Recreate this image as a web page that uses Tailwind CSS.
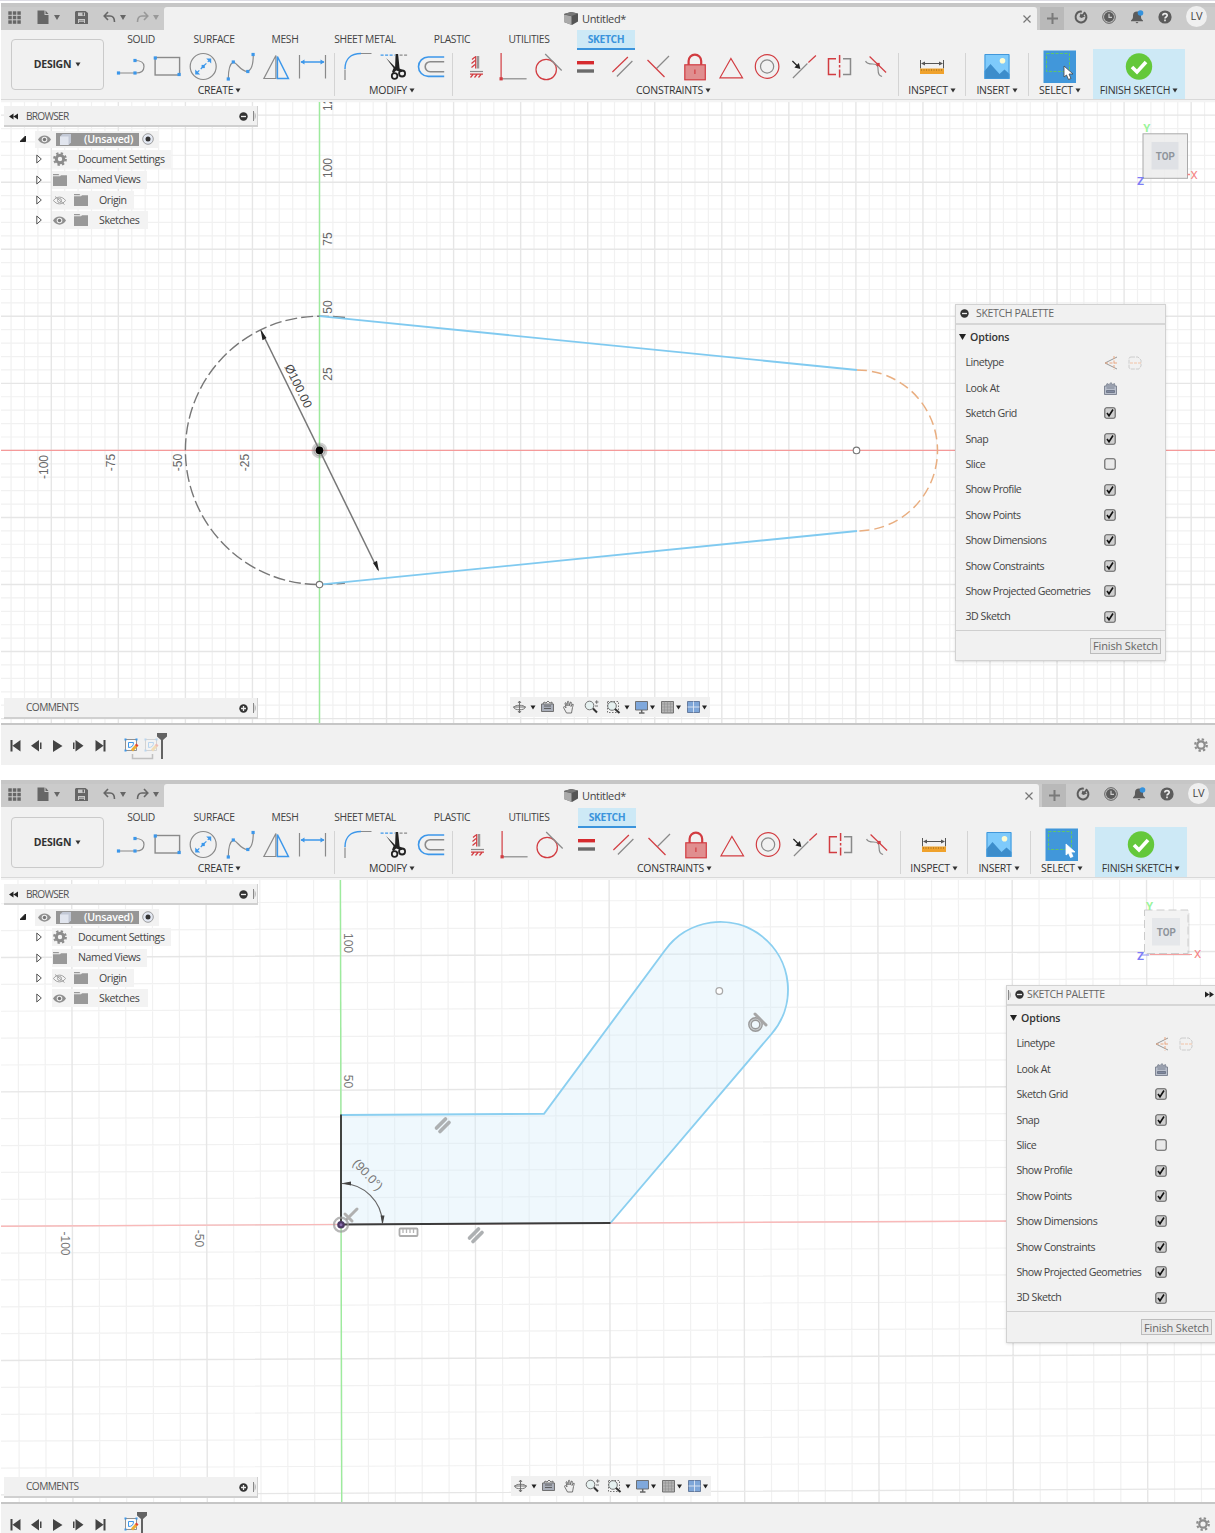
<!DOCTYPE html>
<html lang="en">
<head>
<meta charset="utf-8">
<title>Untitled*</title>
<script src="https://cdn.jsdelivr.net/npm/@tailwindcss/browser@4"></script>
</head>
<body class="w-[1215px] h-[1533px] overflow-hidden bg-white font-['Open_Sans','Noto_Sans',sans-serif] text-[#444]">
<main id="root" class="flex h-[1533px] flex-col"></main>
<script>
const G = '#8a8a8a', B = '#3c97ea', R = '#d23c41';
const dot = (x, y, c = B) => `<rect x="${x - 1.6}" y="${y - 1.6}" width="3.2" height="3.2" fill="${c}" stroke="none"/>`;
const cells = (x0, list) => `<div class="flex">${list.map((c, i) =>
  `<svg class="block h-[34px] w-[36.4px] overflow-visible" viewBox="${(x0 + 36.4 * i).toFixed(1)} 50 36.4 34" fill="none" stroke="${G}" stroke-width="1.2">${c}</svg>`).join('')}</div>`;

// Ribbon icons
const create = cells(112, [
  `<path d="M118 73H136c5 0 8-2.500 8-6.500s-3-6-9-6"/>${dot(118.5, 73)}${dot(135, 73)}${dot(135, 60.5)}`,
  `<rect x="154.500" y="57.500" width="24.500" height="17.500" stroke-width="1.400"/>${dot(154.7, 58)}${dot(178.5, 74.5)}`,
  `<circle cx="203" cy="66.500" r="13"/><path d="M197 72.500l12-12" stroke="${B}" stroke-dasharray="3 2"/><path d="M195 74.500v-5l5 5zM211 58.500v5l-5-5z" fill="${B}" stroke="none"/>${dot(203, 66.5)}`,
  `<path d="M227.500 79c0-8 1-15 5-17 4 1 7 9 14 9.500 4-1 6-8 6-17"/>${dot(227.5, 79)}${dot(232.5, 62)}${dot(247, 71.5)}${dot(252.3, 54.5)}`,
  `<path d="M275.500 55.500L263.500 78.500h12z"/><path d="M277 56.500V78.500h11z" stroke="${B}" stroke-width="1.500"/>`,
  `<path d="M299.500 55v23.500M325.500 55v23.500"/><path d="M301 62h23" stroke="${B}" stroke-width="1.500"/><path d="M300.500 62l4-2.500v5zM324.500 62l-4-2.500v5z" fill="${B}" stroke="none"/>`
]);
const modify = cells(340, [
  `<path d="M345 69c0-10 6-15.500 16-15.500" stroke="${B}" stroke-width="1.500"/><path d="M361 53.500h10.500M345 69.500V80"/>`,
  `<path d="M381 55.200h14" stroke="${B}" stroke-dasharray="3 1.500"/><path d="M400 55.200h8" stroke-dasharray="3 1.500"/><path d="M386.500 58l9 9 .5-13h2.500l1.500 14.500 4 2-2 1.500-5.500-1.500-3 3-1-2 1.500-3.500z" fill="#222" stroke="none"/><circle cx="395" cy="76" r="2.800" stroke="#222" stroke-width="1.800"/><circle cx="402.500" cy="73.500" r="3" stroke="#222" stroke-width="1.800"/>`,
  `<path d="M444 57H428a9.700 9.700 0 0 0 0 19.400H444" stroke="${B}" stroke-width="1.600"/><path d="M444 61.700H430a5 5 0 0 0 0 10H444" stroke-width="1.600"/>`
]);
const constraints = cells(458, [
  `<path d="M478 56v12.500" stroke="#999" stroke-width="2.500"/><path d="M475.700 56v12.500M475 57l-3 2.500M475 60.500l-3.500 3M475 64.500l-3.500 3M470 74.200h13M473 74.500l-2.500 3M477 74.500l-2.500 3M481 74.500l-2.500 3" stroke="${R}"/><path d="M470 71.500h13"/>`,
  `<path d="M501 78.800h25"/><path d="M500.500 53v25" stroke="${R}"/>${dot(500.5, 78.8, R)}`,
  `<circle cx="546" cy="69.500" r="10.200" stroke="${R}"/><path d="M545 54l16.500 16.500"/>`,
  `<path d="M577.200 62.700h17" stroke="#d62a2e" stroke-width="3.400"/><path d="M577.200 71h17" stroke="#6b6b6b" stroke-width="3.400"/>`,
  `<path d="M612 72l15.500-15" stroke="${R}"/><path d="M616.500 76.500l15.500-15.500"/>`,
  `<path d="M656.500 68.500l12.500-12.500"/><path d="M647.500 60l17 17" stroke="${R}"/>`,
  `<path d="M688 65v-4a6.300 6.300 0 0 1 12.600 0v4" stroke="${R}" stroke-width="2.200"/><rect x="684.200" y="64.800" width="20.500" height="15" fill="#e08e8f" stroke="${R}"/><path d="M694.300 69.500v4.500" stroke="${R}"/>`,
  `<path d="M730.700 58.500L719.800 77.800h22.500z" stroke="${R}"/>`,
  `<circle cx="767.300" cy="66.500" r="11.800" stroke="${R}"/><circle cx="767.300" cy="66.500" r="6.600"/>`,
  `<path d="M792.500 78L807 63.500"/><path d="M808 62.500l7.500-7" stroke="${R}"/><path d="M792 61l5 5" stroke="#222"/><path d="M800 69l-1.500-6-4.500 4.500z" fill="#222" stroke="none"/>`,
  `<path d="M836 58.800h-7.500v15.700h7.500" stroke="${R}" stroke-width="1.500"/><path d="M839.600 55v23.500" stroke="${R}" stroke-width="1.500" stroke-dasharray="8 2 2.500 2"/><path d="M843 58.800h7.500v15.700h-7.500" stroke-width="1.500"/>`,
  `<path d="M866 61c1 3 4 3 7 3 5 0 5.500 2 5.500 6s1 6 4 6.500"/><path d="M870 56.500l16.500 16" stroke="${R}"/>${dot(878.5, 64.5, R)}`
]);
const inspect = `<svg class="block h-[34px] w-[36px]" viewBox="914 50 36 34" fill="none" stroke="#555"><path d="M920.500 60v8.500M943.500 60v8.500M922 63.500h20"/><path d="M921 63.500l4-2v4zM943 63.500l-4-2v4z" fill="#555" stroke="none"/><path d="M920 68.500h24v5.500H920z" fill="#f0a22c" stroke="none"/><path d="M921 70h22" stroke="#8c6420" stroke-dasharray="1 1.500"/></svg>`;
const insert = `<svg class="block h-[34px] w-[36px]" viewBox="979 50 36 34"><path d="M984.500 54h25v25h-25z" fill="#7ecafb"/><path d="M984.500 71l6-7 9 10 5-4.500 5 4.500v5h-25z" fill="#3d8dcb"/><circle cx="1002.500" cy="60.800" r="2.800" fill="#fdfbd2"/><path d="M985 54.500h24v24h-24z" fill="none" stroke="#4197da"/></svg>`;
const select = big => `<svg class="block h-[34px] w-[36px]" viewBox="1042 50 36 34"><path d="M1043.500 50.500h32.500v32.500h-32.500z" fill="#4197da"/><path d="M1046.500 53.500h23v18h-23z" fill="none" stroke="#5fc46c" stroke-dasharray="3 1.500"/><path d="M1064 66l0 11 2.500-2 2 4.500 2.500-1-2-4.500h4z" fill="#fff" stroke="${big ? '#fff' : '#444'}" stroke-width=".8"/></svg>`;
const finish = `<svg class="block h-[34px] w-[36px]" viewBox="1121 50 36 34"><circle cx="1139" cy="66.500" r="13.200" fill="#64c83b"/><path d="M1132 67l5 5 9-10" fill="none" stroke="#fff" stroke-width="3.600"/></svg>`;

const caret = `<svg class="inline-block h-[5px] w-[6px]" viewBox="0 0 6 5"><path d="M.5.500h5L3 4.500z" fill="#333"/></svg>`;
const group = (w, icons, label, pad = '', extra = '') => `<div class="flex flex-col items-center ${w} ${extra}">${icons}<div class="flex h-[13px] items-center gap-[2px] whitespace-nowrap text-[10.5px] leading-none font-medium tracking-[-0.25px] text-[#333] ${pad}"><span>${label}</span>${caret}</div></div>`;
const sep = m => `<div class="mt-[3px] h-[43px] w-px bg-[#d4d4d4] ${m}"></div>`;

// Title-bar icons
const gridIcon = `<svg class="h-[13px] w-[13px]" viewBox="0 0 13 13" fill="#666">${[0, 4.5, 9].map(y => [0, 4.5, 9].map(x => `<path d="M${x + .3} ${y + .3}h3.500v3.500h-3.500z"/>`).join('')).join('')}</svg>`;
const tri = c => `<svg class="h-[5px] w-[6px]" viewBox="0 0 6 5"><path d="M0 0h6L3 5z" fill="${c}"/></svg>`;
const fileIcon = `<svg class="h-[14px] w-[12px]" viewBox="0 0 12 14" fill="#666"><path d="M.5.500h7v4.500h4V14H.5zM8.500.500l3 3.500h-3z"/></svg>`;
const saveIcon = `<svg class="h-[13px] w-[13px]" viewBox="0 0 13 13"><path d="M1 0h9.500L13 2v11H0V1z" fill="#666"/><path d="M3 1.500h7v3.500H3zM3 8h7v4H3z" fill="#c8c8c8"/><path d="M7.500 1.500h1.500v3H7.500zM4 9.500h5v.800H4zM4 11h5v1H4z" fill="#666"/></svg>`;
const undoIcon = `<svg class="h-[12px] w-[13px]" viewBox="0 0 13 12" fill="none" stroke="#666" stroke-width="1.600"><path d="M1.500 5H7c3 0 4.500 2 4.500 6M5 1L1.200 5 5 9"/></svg>`;
const redoIcon = c => `<svg class="h-[12px] w-[13px]" viewBox="0 0 13 12" fill="none" stroke="${c}" stroke-width="1.600"><path d="M11.500 5H6C3 5 1.500 7 1.500 11M8 1l3.800 4L8 9"/></svg>`;
const cubeIcon = `<svg class="h-[13px] w-[14px]" viewBox="0 0 14 13"><path d="M0 2l7-2 7 1.500v8L8 13 0 10z" fill="#555"/><path d="M0 2.500l7.500 1.800V13L0 10z" fill="#aaa"/><path d="M0 2l7-2 7 1.500-6.500 2.500z" fill="#777"/></svg>`;
const jobIcon = `<svg class="h-[14px] w-[14px]" viewBox="0 0 14 14"><circle cx="7" cy="7" r="5.400" fill="none" stroke="#5c5c5c" stroke-width="2" stroke-dasharray="31 3" transform="rotate(-60 7 7)"/><path d="M5.500 7l1-3.500 1.500 1 2.500-2.500 1.500 1-2.500 2.500 1.500 1-3.500 1.500z" fill="#5c5c5c"/></svg>`;
const clockIcon = `<svg class="h-[14px] w-[14px]" viewBox="0 0 14 14"><circle cx="7" cy="7" r="6.300" fill="none" stroke="#5c5c5c"/><circle cx="7" cy="7" r="5" fill="#5c5c5c"/><path d="M7 3.800V7.300h3" fill="none" stroke="#ccc" stroke-width="1.200"/></svg>`;
const bellIcon = `<svg class="h-[14px] w-[14px]" viewBox="0 0 14 14"><path d="M1 10.500c2-1.500 2-3 2-5C3 3 4.500 1.500 7 1.500S11 3 11 5.500s0 3.500 2 5v.8H1z" fill="#5c5c5c"/><path d="M5.500 12h3l-1.500 1.500z" fill="#5c5c5c"/><circle cx="10.500" cy="3" r="2.800" fill="#3592dd"/></svg>`;
const helpIcon = `<svg class="h-[14px] w-[14px]" viewBox="0 0 14 14"><circle cx="7" cy="7" r="6.600" fill="#5c5c5c"/><path d="M4.800 5.500C4.800 3 9.200 3 9.200 5.500 9.200 7 7 7 7 8.600" fill="none" stroke="#eee" stroke-width="1.600"/><path d="M6.200 9.600h1.600v1.600H6.200z" fill="#eee"/></svg>`;

const titleBar = o => `<div class="flex h-[23px] bg-[#cbcbcb]">
  <div class="flex h-[23px] w-[163px] items-center pb-[3px]">
    <div class="ml-[7px] flex">${gridIcon}</div>
    <div class="ml-[16px] flex items-center gap-[5px]">${fileIcon}${tri('#666')}</div>
    <div class="ml-[15px] flex">${saveIcon}</div>
    <div class="ml-[15px] flex items-center gap-[4px]">${undoIcon}${tri('#666')}</div>
    <div class="ml-[10px] flex items-center gap-[4px]">${redoIcon(o.redo)}${tri(o.redo)}</div>
  </div>
  <div class="relative flex ${o.tabW} items-center rounded-t-[3px] bg-[#f1f1f1]">
    <div class="flex w-[800px] items-center gap-[4px] pl-[400px] pb-[1px] text-[11px] leading-none font-medium tracking-[-0.35px]">${cubeIcon}<span>Untitled*</span></div>
    <svg class="ml-auto mr-[6px] h-[8px] w-[8px]" viewBox="0 0 8 8" stroke="#777" stroke-width="1.200"><path d="M.5.500l7 7M7.500.500l-7 7"/></svg>
  </div>
  <div class="ml-[3px] flex w-[24px] items-center justify-center bg-[#b9b9b9]"><svg class="h-[11px] w-[11px]" viewBox="0 0 11 11" stroke="#7a7a7a" stroke-width="2"><path d="M5.500 0v11M0 5.500h11"/></svg></div>
  <div class="ml-[10px] flex items-center gap-[14px] pb-[3px]">${jobIcon}${clockIcon}${bellIcon}${helpIcon}</div>
  <div class="-mt-[1px] ml-[14px] flex h-[21px] w-[21px] items-center justify-center rounded-full bg-[#efefef] text-[11px] tracking-[-0.2px] text-[#444]">LV</div>
</div>`;

const ribbon = o => `<div class="flex ${o.ribbonH} bg-[#f1f1f1]">
  <div class="ml-[10px] mt-[9px] flex h-[51px] w-[93px] items-center justify-center gap-[4px] rounded-[4px] border border-[#cacaca] text-[10.5px] font-bold tracking-[-0.3px] text-[#333]">DESIGN ${caret}</div>
  <div class="flex flex-col">
    <div class="flex h-[20px] items-center text-center text-[10.3px] font-medium tracking-[-0.35px] text-[#444]">
      <span class="w-[74px]">SOLID</span><span class="w-[72px]">SURFACE</span><span class="w-[70px]">MESH</span><span class="w-[90px]">SHEET METAL</span><span class="w-[84px]">PLASTIC</span><span class="w-[70px]">UTILITIES</span>
      <span class="${o.tabM} h-[20px] w-[58px] border-b-2 border-[#3b94dc] bg-[#cde9f6] leading-[19px] font-bold text-[#3b94dc]">SKETCH</span>
    </div>
    <div class="flex h-[49px]">
      ${group('w-[219px] ml-[8px]', create, 'CREATE', 'pr-[4px]')}${sep('ml-[3px]')}
      ${group('w-[109px] ml-[5px]', modify, 'MODIFY', 'pr-[5px]')}${sep('ml-[3px]')}
      ${group(o.consM, constraints, 'CONSTRAINTS', 'pr-[6px]')}${sep(o.sepM)}
      ${group('w-[66px]', inspect, 'INSPECT')}${sep('')}
      ${group('w-[62px]', insert, 'INSERT')}${sep('')}
      ${group('w-[62px]', select(o.big), 'SELECT')}
      ${group('w-[92px]', finish, 'FINISH SKETCH', '', 'ml-[2px] -mt-px pt-px bg-[#cde9f6]')}
    </div>
  </div>
</div>
<div class="h-[3px] border-t border-[#d9d9d9] bg-[#f4f4f4]"></div>`;

// Browser tree
const eye = `<svg class="h-[9px] w-[13px] shrink-0" viewBox="0 0 13 9"><path d="M0 4.500C3-1 10-1 13 4.500 10 10 3 10 0 4.500z" fill="#8f8f8f"/><circle cx="6.500" cy="4.500" r="2.800" fill="#eee"/><circle cx="6.500" cy="4.500" r="1.700" fill="#777"/></svg>`;
const eyeOff = `<svg class="h-[9px] w-[13px] shrink-0" viewBox="0 0 13 9" fill="none" stroke="#999" stroke-width=".9"><path d="M.5 4.500C3.500 0 9.500 0 12.500 4.500 9.500 9 3.500 9 .5 4.500zM2 .500l9.500 8"/><circle cx="6.500" cy="4.500" r="2"/></svg>`;
const folder = `<svg class="h-[12px] w-[14px] shrink-0" viewBox="0 0 14 12" fill="#999"><path d="M0 0h5.500l1 1.300H0zM0 2.300h7l1-1h6V12H0z"/></svg>`;
const gear = (s, hole) => `<svg class="${s} shrink-0" viewBox="0 0 14 14"><circle cx="7" cy="7" r="5.800" fill="none" stroke="#8c8c8c" stroke-width="2.200" stroke-dasharray="2.300 2.255"/><circle cx="7" cy="7" r="3.700" fill="none" stroke="#8c8c8c" stroke-width="${hole}"/></svg>`;
const open = `<svg class="h-[10px] w-[6px]" viewBox="0 0 6 10"><path d="M.8 1v8L5.300 5z" fill="#fff" stroke="#444" stroke-width=".9"/></svg>`;
const grip = `<svg class="h-[10px] w-[4px]" viewBox="0 0 4 10"><path d="M.5 0v10" stroke="#888"/><path d="M1.500 1q3 4 0 8z" fill="#bbb"/></svg>`;
const knob = (plus) => `<svg class="h-[9px] w-[9px]" viewBox="0 0 9 9"><circle cx="4.500" cy="4.500" r="4.200" fill="#333"/><path d="M2 4.500h5${plus ? 'M4.500 2v5' : ''}" stroke="#eee" stroke-width="1.300"/></svg>`;
const node = (icons, text, w) => `<div class="flex h-[20.300px] items-center pl-[32px]">${open}<div class="ml-[10px] flex h-[18px] items-center ${w} bg-[#f2f2f2]/95 pl-[1px]">${icons}<span class="ml-[11px] whitespace-nowrap">${text}</span></div></div>`;
const browser = `<div class="absolute left-[3px] top-[4px] w-[254px] text-[10.6px] leading-none font-medium tracking-[-0.42px]">
  <div class="flex h-[21px] items-center border-b-2 border-r border-[#d0d0d0] bg-[#f1f1f1] pt-px"><svg class="ml-[5px] h-[7px] w-[9px]" viewBox="0 0 9 7"><path d="M4.500.500v6L0 3.500zM9 .500v6L4.500 3.500z" fill="#222"/></svg><span class="ml-[8px] text-[10.2px] tracking-[-0.75px] text-[#555]">BROWSER</span><div class="ml-auto flex items-center gap-[5px]">${knob(false)}${grip}</div></div>
  <div class="mt-[2px] flex h-[20.300px] items-center pl-[16px]"><svg class="h-[6px] w-[6px]" viewBox="0 0 6 6"><path d="M5.500 0v5.500H0z" fill="#222" stroke="#222"/></svg>
    <div class="ml-[9px] flex h-[17px] w-[124px] items-center bg-[#f2f2f2] pl-[3px]">${eye}<div class="ml-[5px] flex h-[13px] w-[83px] items-center bg-[#969696] pl-[4px] font-semibold tracking-[-0.2px] text-white"><svg class="h-[11px] w-[11px]" viewBox="0 0 11 11"><path d="M0 2.500L2.500 0H11v8.500L8.500 11H0z" fill="#c3c9d6"/><path d="M0 2.500h8.500V11H0z" fill="#e1e5ee"/></svg><span class="ml-[13px]">(Unsaved)</span></div>
    <svg class="ml-[3px] h-[12px] w-[12px]" viewBox="0 0 12 12"><circle cx="6" cy="6" r="5.300" fill="#e4e9f3" stroke="#888" stroke-width=".8"/><circle cx="6" cy="6" r="2.500" fill="#333"/></svg></div></div>
  ${node(gear('h-[14px] w-[14px]', 3), 'Document Settings', 'w-[119px]')}
  ${node(folder, 'Named Views', 'w-[95px]')}
  ${node(eyeOff + `<span class="w-[8px]"></span>` + folder, 'Origin', 'w-[82px]')}
  ${node(eye + `<span class="w-[8px]"></span>` + folder, 'Sketches', 'w-[96px]')}
</div>`;
const comments = `<div class="absolute bottom-[4px] left-[3px] flex h-[21px] w-[254px] items-center border-b-2 border-r border-[#d0d0d0] bg-[#f1f1f1] pt-px text-[10.2px] tracking-[-0.6px] font-medium text-[#555]"><span class="ml-[22px]">COMMENTS</span><div class="ml-auto flex items-center gap-[5px]">${knob(true)}${grip}</div></div>`;

// Look-at glyph of the palette
const look = `<svg class="h-[13px] w-[13px]" viewBox="0 0 13 13"><path d="M.5 4h12v8.500H.5z" fill="#b9bfcc" stroke="#777e8c" stroke-width=".9"/><path d="M2 4l1-2.500 2 1L7 .500l1.500 2 2-1L11 4" fill="#999fae" stroke="#777e8c" stroke-width=".7"/><path d="M2.500 6h8M2.500 8.500h8v2h-8z" fill="#8089a0" stroke="#666e80" stroke-width=".8"/></svg>`;
const nav = o => `<div class="absolute bottom-[6px] ${o.navX} flex h-[20px] w-[200px] items-center bg-[#f1f1f1]">
  <svg class="block h-[20px] w-[200px]" viewBox="510 697 200 20" fill="none" stroke="#666" stroke-width=".9">
    <path d="M519.500 701v12M514 707.500c0-3 11-3 11 0s-11 3-11 0M513 707h13M518 703l1.500-2 1.500 2M518 711l1.500 2 1.500-2"/>
    <path d="M541.500 704h12v7.500h-12z" fill="#a8adb8"/><path d="M543 704l1-2 2 1 2-2 2 2 2-1v2" /><path d="M544 706h7M544 708.500h7" stroke="#555"/>
    <path d="M566.500 713l-3-5.500c0-1.500 1.500-1 2.500.500l-1-5c.5-1 1.500 0 2 3l.5-4.500c1-1 1.500 0 1.500 4.500l1.500-4c1-.5 1 1 .500 4.500l1.700-2.500c1 0 .5 1-.2 3.500l-1 5.500z" fill="#eee"/>
    <circle cx="589.500" cy="705.500" r="4.300" fill="#e6f1f0"/><path d="M593 708.500l4 4" stroke="#333" stroke-width="2"/><path d="M595 702h3.500M596.700 700.300v3.500M595 706h3"/>
    <path d="M607.500 701.500h11v11h-11z" stroke-dasharray="1.500 1.500"/><circle cx="612" cy="706" r="4.300" fill="#e6f1f0"/><path d="M615 709l4.500 4" stroke="#333" stroke-width="2"/>
    <path d="M635.500 701.500h12v8.500h-12z" fill="#7fa8dc"/><path d="M639 713h5.500M641.700 710v3" stroke-width="1.500"/>
    <path d="M661.500 701.500h12v11.500h-12z" fill="#b3b3b3"/><path d="M661.500 704h12M661.500 707h12M661.500 710h12M664.500 701.500V713M667.500 701.500V713M670.500 701.500V713" stroke="#8a8a8a" stroke-width=".5"/>
    <path d="M687.500 701.500h12v11h-12z" fill="#7ea6d8" stroke="#5c7396"/><path d="M693.500 701.500v11M687.500 707h12" stroke="#e0e8f4"/>
    <path d="M530.500 705.500h5l-2.500 4zM624.500 705.500h5l-2.500 4zM650 705.500h5l-2.500 4zM676 705.500h5l-2.500 4zM702 705.500h5l-2.500 4z" fill="#222" stroke="none"/>
  </svg></div>`;

const box = on => `<svg class="h-[12px] w-[12px] shrink-0" viewBox="0 0 12 12"><rect x=".8" y=".8" width="10.400" height="10.400" rx="1.800" fill="${on ? '#cfcfcf' : '#e9e9e9'}" stroke="#5e5e5e" stroke-width="1.100"/>${on ? '<path d="M3 6l2 2.800L9 2.500" fill="none" stroke="#111" stroke-width="1.600"/>' : ''}</svg>`;
const linetype = `<svg class="-mr-[24px] h-[14px] w-[38px]" viewBox="0 0 38 14" fill="none"><path d="M13 1L1 7l12 6" stroke="#999"/><path d="M1 7h13M10 0v14" stroke="#e9a782" stroke-dasharray="3 1.500"/><path d="M27 1h7l3 3v6l-2 3h-8q-2 0-2-2V3q0-2 2-2z" stroke="#ccc" stroke-dasharray="4 1"/><path d="M26 7h11" stroke="#f2c3a6" stroke-dasharray="3 1"/></svg>`;
const row = (t, c) => `<div class="flex h-[25.400px] items-center pl-[9.500px]"><span class="w-[138px] whitespace-nowrap">${t}</span>${c}</div>`;
const palette = o => `<div class="absolute ${o.pal} flex flex-col border border-[#d2d2d2] bg-[#f1f1f1] text-[10.6px] leading-none font-medium tracking-[-0.48px] text-[#444] shadow-sm">
  <div class="flex h-[20px] items-center border-b-2 border-[#d6d6d6] pb-px text-[10.5px] tracking-[-0.35px] text-[#666]">${o.head}</div>
  <div class="flex h-[25px] items-center gap-[4px] pl-[3px] pb-px font-semibold tracking-[-0.15px] text-[#333]"><svg class="h-[6px] w-[7px]" viewBox="0 0 7 6"><path d="M0 0h7L3.500 6z" fill="#222"/></svg>Options</div>
  ${row('Linetype', linetype)}${row('Look At', look)}${row('Sketch Grid', box(1))}${row('Snap', box(1))}${row('Slice', box(0))}${row('Show Profile', box(1))}${row('Show Points', box(1))}${row('Show Dimensions', box(1))}${row('Show Constraints', box(1))}${row('Show Projected Geometries', box(1))}${row('3D Sketch', box(1))}
  <div class="mt-px flex flex-1 items-center justify-end border-t border-[#cfcfcf] pr-[4px]"><span class="flex h-[16px] w-[71px] items-center justify-center border border-[#bcbcbc] bg-[#e9e9e9] whitespace-nowrap text-[11px] tracking-[-0.15px] text-[#666]">Finish Sketch</span></div>
</div>`;

// Timeline
const sketchGlyph = (x, op) => `<g opacity="${op}"><path d="M${x} 739.500h11v11h-11z" fill="#fafafa" stroke="#777" stroke-width=".8"/><path d="M${x + 3} 742.500h5q0 5-5 5z" fill="none" stroke="${B}"/>${[[0, 739.5], [11, 739.5], [0, 750.5]].map(p => `<rect x="${x + p[0] - 1}" y="${p[1] - 1}" width="2" height="2" fill="${B}"/>`).join('')}<path d="M${x + 6.500} 750.500l4.500-5" stroke="#eeae35" stroke-width="2.800"/><path d="M${x + 10.500} 746l1.500-1.500" stroke="#e0453a" stroke-width="2.800"/></g>`;
const timeline = o => `<div class="flex ${o.timeH} items-start justify-between border-t-2 border-[#c6c6c6] bg-[#f1f1f1]">
  <svg class="block h-[38px] w-[200px]" viewBox="1 725 200 38"><g fill="#444"><path d="M10.500 740h2v11.500h-2zM20.500 740v11.500l-8-5.700zM39 740v11.500l-8-5.700zM53 740v12l9.500-6zM75.500 740v11.500l8-5.700zM95.500 740v11.500l8-5.700zM103.500 740h2v11.500h-2zM40 742.500h1.500v6.500H40zM73 742.500h1.500v6.500H73z"/></g>
  ${sketchGlyph(125.5, 1)}${o.two ? sketchGlyph(145.5, .3) + '<path d="M132.500 754v4.500h20V754" fill="none" stroke="#c0c0c0" stroke-width="1.500"/>' : ''}
  <path d="M${o.mark - 5} 733h10v3.500l-4 3.500v19h-2v-19l-4-3.500z" fill="#636363"/></svg>
  <div class="${o.gearM} pt-[13px]">${gear('h-[14px] w-[14px]', 2.2)}</div>
</div>`;

// Canvas helpers
const line = (x1, y1, x2, y2, c, w = 1) => `<path d="M${x1} ${y1}L${x2} ${y2}" stroke="${c}" stroke-width="${w}"/>`;
function gridLines(ox, oy, step, x0, x1, y0, y1, kx, ky) {
  let minor = '', major = '';
  for (let i = Math.ceil((x0 - 5 - ox) / step); ox + i * step < x1 + 5; i++) {
    const x = ox + i * step, s = `M${(x + kx * (y0 - oy)).toFixed(2)} ${y0}L${(x + kx * (y1 - oy)).toFixed(2)} ${y1}`;
    if (i % 5) minor += s; else major += s;
  }
  for (let i = Math.ceil((y0 - 5 - oy) / step); oy + i * step < y1 + 5; i++) {
    const y = oy + i * step, s = `M${x0} ${(y + ky * (x0 - ox)).toFixed(2)}L${x1} ${(y + ky * (x1 - ox)).toFixed(2)}`;
    if (i % 5) minor += s; else major += s;
  }
  return `<path d="${minor}" stroke="#f1f1f1" fill="none" stroke-width="1.200"/><path d="${major}" stroke="#e6e6e6" fill="none" stroke-width="1.400"/>`;
}
const tick = (x, y, a, t) => `<text transform="translate(${x} ${y}) rotate(${a})" text-anchor="middle" y="4.200">${t}</text>`;
const slot = `<svg class="absolute inset-0 block h-[621px] w-[1214px]" viewBox="1 102 1214 621" fill="none">
  ${gridLines(319.5, 450.4, 13.41, 1, 1215, 102, 723, 0, 0)}
  ${line(1, 450.4, 1215, 450.4, '#f59a9a', 1.2)}${line(319.5, 102, 319.500, 723, '#9deb9d', 1.4)}
  <g class="font-['Liberation_Sans',sans-serif] text-[12px]" fill="#666">${tick(327.5, 101, -90, '125')}${tick(327.5, 168, -90, '100')}${tick(327.5, 239, -90, '75')}${tick(327.5, 307, -90, '50')}${tick(327.5, 374, -90, '25')}${tick(43.5, 467, -90, '-100')}${tick(111, 462.5, -90, '-75')}${tick(178, 462.5, -90, '-50')}${tick(245, 462.5, -90, '-25')}</g>
  <path d="M345 317.500Q332 316.200 319.500 316.200A134.200 134.200 0 0 0 319.500 584.600Q332 584.600 345 583" stroke="#777" stroke-width="1.400" stroke-dasharray="12 4"/>
  ${line(319.5, 316.2, 857, 370, '#80caf0', 1.8)}${line(319.5, 584.6, 857, 531, '#80caf0', 1.8)}
  <path d="M857 370A80.500 80.500 0 0 1 857 531" stroke="#e9ae80" stroke-width="1.500" stroke-dasharray="10 5"/>
  ${line(261, 330.5, 378, 570, '#777', 1.5)}<path d="M260.500 329.500l6 8.500-4 2.200zM379 571.500l-6-8.500 4-2.200z" fill="#222"/>
  <text transform="translate(298.500 386) rotate(64)" text-anchor="middle" y="4.300" class="font-['Liberation_Sans',sans-serif] text-[12.3px]" fill="#444">Ø100.00</text>
  <circle cx="319.500" cy="450.400" r="8" fill="#777" fill-opacity=".35"/><circle cx="319.500" cy="450.400" r="5.500" stroke="#777" stroke-opacity=".5"/><circle cx="319.500" cy="450.400" r="3.800" fill="#000"/>
  <circle cx="319.500" cy="584.600" r="3.200" fill="#fff" stroke="#777" stroke-width="1.100"/><circle cx="856.500" cy="450.400" r="3.300" fill="#fff" stroke="#777" stroke-width="1.100"/>
  <g class="font-['Roboto',sans-serif] text-[11.5px]"><rect x="1143" y="133.800" width="44.500" height="44.500" fill="#ececec" fill-opacity=".85" stroke="#aaa"/><rect x="1151.500" y="142" width="27" height="27.500" fill="#dfe1e5"/><text x="1165.300" y="160" text-anchor="middle" fill="#8f959c" font-weight="700" textLength="19" lengthAdjust="spacingAndGlyphs">TOP</text><text x="1143.300" y="131.500" fill="#9af59a" font-weight="700">Y</text><text x="1137" y="184.500" fill="#7d7df5" font-weight="700">Z</text><text x="1190.500" y="178.500" fill="#f58585">X</text><path d="M1187.500 174.500h2.500" stroke="#f58585" stroke-width="1.500"/></g>
</svg>`;
const bar = (x, y) => `<path d="M${x - 6} ${y + 3}l9-9M${x - 2.500} ${y + 6.500}l9-9" stroke="#adb0b2" stroke-width="3.700" stroke-linecap="round"/>`;
const crank = `<svg class="absolute inset-0 block h-[622px] w-[1214px]" viewBox="1 880 1214 622" fill="none">
  ${gridLines(341.1, 1224.5, 26.87, 1, 1215, 880, 1502, .002, -.005)}
  ${line(1, 1226.2, 1215, 1220, '#f9b9b9', 1.4)}${line(340.4, 880, 341.7, 1502, '#9deb9d', 1.4)}
  <path d="M341 1115L544 1113.800L665 950.300A67.800 67.800 0 1 1 771.500 1034L610.500 1223L341 1224.500z" fill="#d5ecfa" fill-opacity=".38"/>
  <path d="M341 1115L544 1113.800L665 950.300A67.800 67.800 0 1 1 771.500 1034L610.500 1223" stroke="#8bcff0" stroke-width="1.900"/>
  <path d="M341 1114.500V1224.500L610.500 1223" stroke="#3b3b3b" stroke-width="1.900"/>
  <g class="font-['Liberation_Sans',sans-serif] text-[12px]" fill="#777">${tick(348.7, 943, 90, '100')}${tick(348.7, 1081.5, 90, '50')}${tick(65, 1243.5, 90, '-100')}${tick(199.5, 1238.5, 90, '-50')}</g>
  <path d="M342 1183.500A41 41 0 0 1 382.500 1223.500" stroke="#666" stroke-width="1.200"/><path d="M342 1183.300l9-1.800v4zM382.700 1224.500l-2.200-9h4z" fill="#444"/>
  <text transform="translate(368 1174.500) rotate(47)" text-anchor="middle" y="4.300" class="font-['Liberation_Sans',sans-serif] text-[12.5px]" fill="#777">(90.0°)</text>
  ${bar(442.5, 1125)}${bar(475.5, 1235)}
  <rect x="399.500" y="1228.500" width="18" height="7.500" rx="1" stroke="#adadad" stroke-width="1.800"/><path d="M403 1229v4M406.500 1229v4M410 1229v4M413.500 1229v4" stroke="#b5b5b5" stroke-width="1.300"/>
  <path d="M347 1219l10-10M345 1214l7 7" stroke="#b0b0b0" stroke-width="3" stroke-linecap="round"/><circle cx="341" cy="1224.700" r="7" stroke="#999" stroke-opacity=".7" stroke-width="2.200"/><circle cx="341" cy="1224.700" r="3.800" fill="#4d3b66"/><circle cx="341" cy="1224.700" r="1.500" fill="#8a70b0"/>
  <circle cx="719.300" cy="991" r="3.300" fill="#fff" stroke="#aaa" stroke-width="1.300"/>
  <circle cx="755.500" cy="1024.500" r="5.500" stroke="#999" stroke-width="3.800"/><circle cx="755.500" cy="1024.500" r="5.500" stroke="#c8ccce" stroke-width="1.200"/><path d="M755 1014l11 11" stroke="#a6a6a6" stroke-width="3" stroke-linecap="round"/>
  <g class="font-['Roboto',sans-serif] text-[11.5px]"><rect x="1147" y="913" width="43" height="43" fill="#999" fill-opacity=".13"/><rect x="1145.500" y="911" width="43.500" height="44" fill="#aaa" fill-opacity=".12"/><rect x="1144.500" y="910" width="43.500" height="43.500" fill="#f3f3f3" stroke="#ccc" stroke-dasharray="8 4"/><rect x="1152" y="918" width="28" height="27.500" fill="#e5e7ea"/><text x="1166.300" y="936" text-anchor="middle" fill="#8f959c" font-weight="700" textLength="19" lengthAdjust="spacingAndGlyphs">TOP</text><text x="1146" y="910" fill="#9af59a" font-weight="700">Y</text><text x="1137" y="959.500" fill="#7d7df5" font-weight="700">Z</text><path d="M1142 955h7" stroke="#8f8ff5"/><path d="M1150 954.500h42" stroke="#f5a0a0"/><text x="1194" y="957.500" fill="#f58585">X</text></g>
</svg>`;

const app = o => `<section class="ml-px flex flex-col ${o.mt}">
  <div class="h-[4px] bg-[#c6c6c6]"></div>
  ${titleBar(o)}${ribbon(o)}
  <div class="relative ${o.canvasH} overflow-hidden bg-white">${o.scene}${browser}${comments}${nav(o)}${palette(o)}</div>
  ${timeline(o)}
</section>`;

document.getElementById('root').innerHTML = `<div class="h-px bg-[#dddce4]"></div>` + app({
  mt: 'mt-[2px]', redo: '#999', tabW: 'w-[873px]', tabM: 'ml-[13px]', consM: 'w-[437px] ml-[5px]', sepM: 'ml-[3px]', big: false,
  ribbonH: 'h-[69px]', canvasH: 'h-[621px]', scene: slot, navX: 'left-[509px]', timeH: 'h-[42px]', two: true, mark: 162, gearM: 'pr-[7px]',
  pal: 'left-[954px] top-[202px] h-[357px] w-[211px]',
  head: `<span class="ml-[4px] flex">${knob(false)}</span><span class="ml-[7px]">SKETCH PALETTE</span>`
}) + app({
  mt: 'mt-[15px]', redo: '#666', tabW: 'w-[875px]', tabM: 'ml-[14px]', consM: 'w-[437px] ml-[6px]', sepM: 'ml-[4px]', big: true,
  ribbonH: 'h-[70px] pt-px', canvasH: 'h-[622px]', scene: crank, navX: 'left-[510px]', timeH: 'h-[31px] overflow-hidden', two: false, mark: 142, gearM: 'pr-[5px]',
  pal: 'left-[1005px] top-[105px] h-[358px] w-[211px]',
  head: `<span class="ml-[1px] flex">${grip}</span><span class="ml-[3px] flex">${knob(false)}</span><span class="ml-[3px]">SKETCH PALETTE</span><svg class="ml-auto mr-[2px] h-[7px] w-[9px]" viewBox="0 0 9 7"><path d="M0 .5v6l4.500-3zM4.500.500v6l4.500-3z" fill="#222"/></svg>`
});
</script>
</body>
</html>
